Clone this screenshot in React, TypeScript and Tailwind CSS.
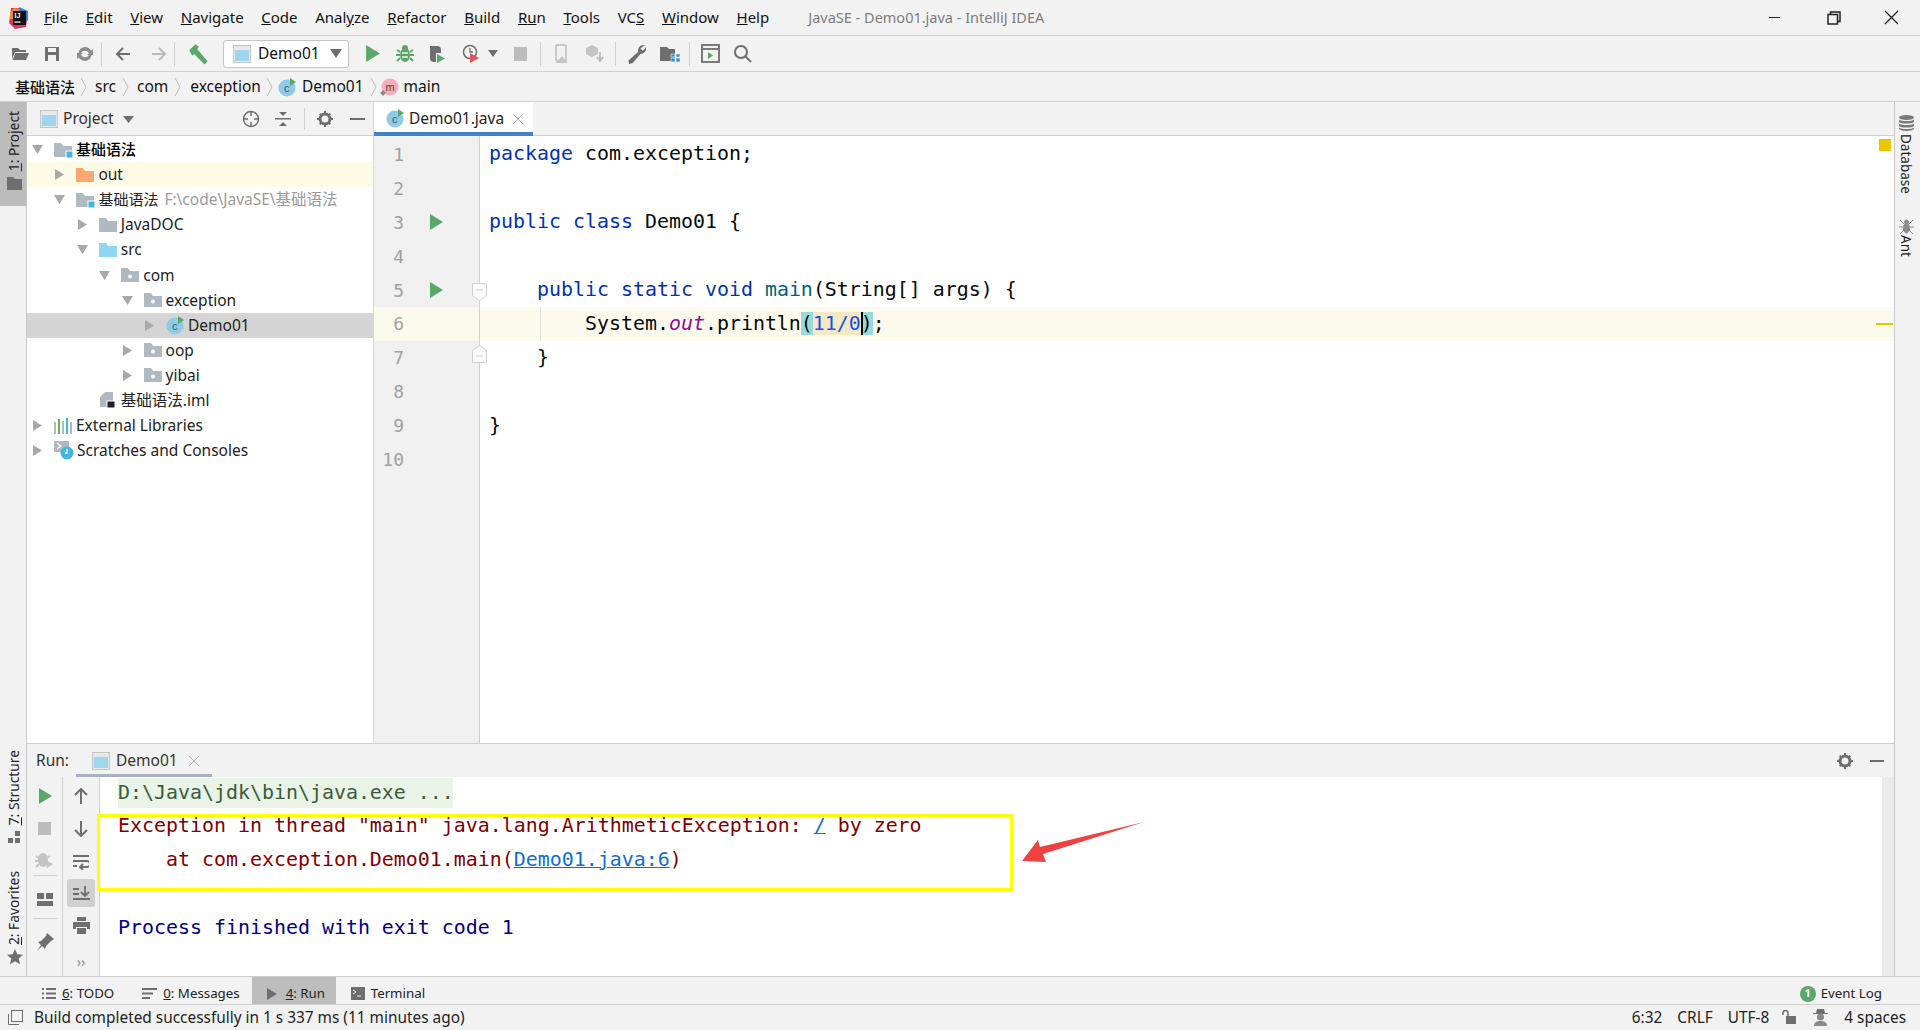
import React from "react";

const ui = "font-['Noto_Sans','Noto_Sans_CJK_SC',sans-serif]";
const mono = "font-['DejaVu_Sans_Mono',monospace] text-[19.93px]";

const Play = ({ size = 16, color = "#59a869" }: { size?: number; color?: string }) => (
  <svg width={size} height={size} viewBox="0 0 16 16"><path d="M2 0l13 8-13 8z" fill={color} /></svg>
);

const Arrow = ({ open }: { open: boolean }) => (
  <svg width="11" height="11" viewBox="0 0 11 11" className="shrink-0">
    {open ? <path d="M0 1h11L5.500 10z" fill="#a8a8a8" /> : <path d="M1 0l9 5.500L1 11z" fill="#a8a8a8" />}
  </svg>
);

const Folder = ({ color = "#afb9c1", dot = false, badge = false }: { color?: string; dot?: boolean; badge?: boolean }) => (
  <svg width="19" height="18" viewBox="0 0 19 18" className="shrink-0">
    <path d="M0 2h7l2 3h9v11H0z" fill={color} />
    {dot && <circle cx="9" cy="10.500" r="2" fill="#fff" />}
    {badge && <rect x="12" y="10" width="7" height="7" fill="#40b6e0" stroke="#fff" strokeWidth="1" />}
  </svg>
);

const ClassIcon = () => (
  <svg width="19" height="19" viewBox="0 0 19 19" className="shrink-0">
    <circle cx="9" cy="10" r="8.500" fill="#8fcbe6" />
    <text x="6" y="14" fontSize="11" fill="#3d5a68" fontFamily="Liberation Sans">c</text>
    <path d="M12 0l6 4-6 4z" fill="#59a869" />
  </svg>
);

const MethodIcon = () => (
  <svg width="19" height="19" viewBox="0 0 19 19" className="shrink-0">
    <circle cx="10" cy="9" r="8.500" fill="#f4afb8" />
    <text x="5.500" y="13" fontSize="11" fill="#5c3c40" fontFamily="Liberation Sans">m</text>
    <path d="M3 12l3 3-3 3-3-3z" fill="#8a8f94" />
  </svg>
);

const WindowIcon = () => (
  <svg width="18" height="18" viewBox="0 0 18 18" className="shrink-0">
    <rect x="0.500" y="0.500" width="17" height="17" fill="#e8e8e8" stroke="#c4c4c4" />
    <rect x="2" y="5" width="14" height="11" fill="#9fd6ee" />
  </svg>
);

const Gear = () => (
  <svg width="16" height="16" viewBox="0 0 16 16"><circle cx="8" cy="8" r="5" fill="none" stroke="#6e6e6e" strokeWidth="3" /><path d="M7 0h2v3H7zM7 13h2v3H7zM0 7h3v2H0zM13 7h3v2h-3zM2 3.400L3.400 2l2 2L4 5.400zM10.600 12l1.400-1.400 2 2-1.400 1.400zM2 12.600l2-2L5.400 12l-2 2zM10.600 4l2-2L14 3.400l-2 2z" fill="#6e6e6e" /></svg>
);

const Gray = ({ children, w = 18, h = 18 }: { children: React.ReactNode; w?: number; h?: number }) => (
  <svg width={w} height={h} viewBox="0 0 18 18" fill="#6e6e6e" className="shrink-0">{children}</svg>
);

function Slot({ w, children }: { w: string; children: React.ReactNode }) {
  return <div className={`flex items-center justify-center shrink-0 ${w}`}>{children}</div>;
}

function TitleBar() {
  const menu = [
    ["F", "ile", ""], ["E", "dit", ""], ["V", "iew", ""], ["N", "avigate", ""], ["C", "ode", ""],
    ["", "Anal", "y|ze"], ["R", "efactor", ""], ["B", "uild", ""], ["R", "", "u|n"], ["T", "ools", ""],
    ["", "VC", "S|"], ["W", "indow", ""], ["H", "elp", ""],
  ];
  return (
    <div className="h-[36px] shrink-0 flex items-center border-b border-[#d0d0d0] bg-[#f2f2f2] text-[15px] text-[#111]">
      <div className="w-[44px] pl-[9px] shrink-0">
        <svg width="20" height="22" viewBox="0 0 20 22">
          <path d="M2 1l9 0 8 5-2 14-11 2-6-6z" fill="#e0335f" />
          <path d="M10 0l9 4 0 10-6-2z" fill="#3a7be0" />
          <path d="M1 6l4-5 6 1-4 10-6 0z" fill="#f08a2a" />
          <rect x="4" y="4" width="13" height="14" fill="#111" />
          <text x="5.500" y="11" fontSize="7" fill="#fff" fontWeight="700" fontFamily="Liberation Sans">IJ</text>
          <rect x="5.500" y="14.500" width="6" height="1.200" fill="#fff" />
        </svg>
      </div>
      <div className="flex gap-[17.700px]">
        {menu.map(([a, b, c], i) => {
          const [u, rest] = c.split("|");
          return (
            <span key={i}>
              {a && <u>{a}</u>}{b}{u && <u>{u}</u>}{rest}
            </span>
          );
        })}
      </div>
      <span className="ml-[39px] text-[#7d7d7d] text-[14.500px]">JavaSE - Demo01.java - IntelliJ IDEA</span>
      <div className="ml-auto flex items-center pr-[21px]">
        <div className="w-[11px] h-[1px] bg-[#222]" />
        <svg width="14" height="14" viewBox="0 0 14 14" fill="none" stroke="#222" strokeWidth="1.500" className="ml-[47px]">
          <rect x="1" y="3.500" width="9.500" height="9.500" /><path d="M3.500 3V1H13v9.500h-2.500" />
        </svg>
        <svg width="15" height="15" viewBox="0 0 15 15" stroke="#222" strokeWidth="1.300" className="ml-[43px]"><path d="M1 1l13 13M14 1L1 14" /></svg>
      </div>
    </div>
  );
}

const Sep = ({ h = "h-[24px]" }: { h?: string }) => <div className={`w-[1px] bg-[#d0d0d0] shrink-0 ${h}`} />;

function ToolBar() {
  return (
    <div className="h-[36px] shrink-0 flex items-center pl-[5px] border-b border-[#d0d0d0] bg-[#f2f2f2]">
      <Slot w="w-[30px]"><Gray><path d="M1 3h6l2 2h6v2H4L1 14zM4.500 8H18l-3 7H1.500z" /></Gray></Slot>
      <Slot w="w-[33px]"><Gray><path d="M2 2h14v14H2zM5 3v4h8V3zM5 10v6h8v-6z" fillRule="evenodd" /></Gray></Slot>
      <Slot w="w-[33px]"><Gray><path d="M9 2a7 7 0 0 1 6 3.500l2-1.500v6h-6l2-1.500A4.500 4.500 0 0 0 5 8H2.500A7 7 0 0 1 9 2zM9 16a7 7 0 0 1-6-3.500L1 14V8h6l-2 1.500A4.500 4.500 0 0 0 13 10h2.500A7 7 0 0 1 9 16z" fill="#8c8c8c" /></Gray></Slot>
      <Sep />
      <Slot w="w-[41px]"><Gray><path d="M9 3L3 9l6 6M3 9h13" fill="none" stroke="#6e6e6e" strokeWidth="2" /></Gray></Slot>
      <Slot w="w-[31px]"><Gray><path d="M9 3l6 6-6 6M15 9H2" fill="none" stroke="#b8b8b8" strokeWidth="2" /></Gray></Slot>
      <Sep />
      <Slot w="w-[43px] pl-[4px]"><Gray w={22} h={22}><path d="M1 6l5-5 3 2-1.500 2L16 15l-2.500 2.500L5 9l-1.500 1.500z" fill="#59a869" /></Gray></Slot>
      <div className={`ml-[5px] w-[126px] h-[28px] shrink-0 flex items-center rounded-[3px] border border-[#c4c4c4] bg-white pl-[9px] text-[15.500px] text-[#111] ${ui}`}>
        <WindowIcon />
        <span className="ml-[7px]">Demo01</span>
        <svg width="12" height="9" viewBox="0 0 12 9" className="ml-[10px]"><path d="M0 0h12L6 9z" fill="#6e6e6e" /></svg>
      </div>
      <Slot w="w-[46px]"><Play size={17} /></Slot>
      <Slot w="w-[20px]">
        <svg width="18" height="19" viewBox="0 0 18 19" fill="#59a869"><ellipse cx="9" cy="11" rx="5" ry="7" /><circle cx="9" cy="4" r="3" /><path d="M1 6l3 2M17 6l-3 2M0 11h4M18 11h-4M1 17l3-3M17 17l-3-3" stroke="#59a869" strokeWidth="2" /><path d="M6 9h6M6 13h6" stroke="#f2f2f2" strokeWidth="1.500" /></svg>
      </Slot>
      <Slot w="w-[44px]">
        <svg width="18" height="18" viewBox="0 0 18 18"><path d="M2 1h7a4 4 0 0 1 4 4v3H8v9H6a4 4 0 0 1-4-4z" fill="#6e6e6e" /><path d="M9 9l8 4.500L9 18z" fill="#59a869" /></svg>
      </Slot>
      <Slot w="w-[24px]">
        <svg width="19" height="19" viewBox="0 0 19 19" fill="none"><circle cx="8" cy="8" r="6.500" stroke="#6e6e6e" strokeWidth="1.500" /><path d="M8 4v4h3" stroke="#6e6e6e" strokeWidth="1.300" /><path d="M8 9l9 5-9 5z" fill="#db5860" /></svg>
      </Slot>
      <Slot w="w-[19px]"><svg width="10" height="7" viewBox="0 0 10 7"><path d="M0 0h10L5 7z" fill="#6e6e6e" /></svg></Slot>
      <Slot w="w-[37px]"><div className="w-[13px] h-[14px] bg-[#bcbcbc]" /></Slot>
      <div className="ml-[1px]"><Sep /></div>
      <Slot w="w-[42px]">
        <svg width="18" height="20" viewBox="0 0 18 20" fill="none"><rect x="3" y="1" width="10" height="16" rx="1" stroke="#bcbcbc" strokeWidth="1.500" /><path d="M9 12l6 7H3z" fill="#c4c4c4" /></svg>
      </Slot>
      <Slot w="w-[26px]">
        <svg width="20" height="20" viewBox="0 0 20 20"><path d="M6 1l6 3v6l-6 3-6-3V4z" fill="#c4c4c4" /><path d="M14 8v8M11 13l3 4 3-4" stroke="#bcbcbc" strokeWidth="1.800" fill="none" /></svg>
      </Slot>
      <div className="ml-[6px]"><Sep /></div>
      <Slot w="w-[39px]"><Gray w={20} h={20}><path d="M17 1a5 5 0 0 0-6 6L2 15l1 3 3-1 7-8a5 5 0 0 0 5-6l-3 3-2-2z" /></Gray></Slot>
      <Slot w="w-[29px]">
        <svg width="20" height="18" viewBox="0 0 20 18"><path d="M0 2h7l2 2h6v12H0z" fill="#6e6e6e" /><path d="M11 9h4v3h-4zM16 9h4v3h-4zM11 13h4v4h-4zM16 13h4v4h-4z" fill="#3d8fd8" stroke="#f2f2f2" strokeWidth="0.600" /></svg>
      </Slot>
      <div className="ml-[5px]"><Sep /></div>
      <Slot w="w-[41px]">
        <svg width="19" height="19" viewBox="0 0 19 19" fill="none"><rect x="1" y="1" width="17" height="17" stroke="#6e6e6e" strokeWidth="1.800" /><path d="M1 5h17" stroke="#6e6e6e" strokeWidth="1.800" /><path d="M7 8l5 3.500L7 15z" fill="#59a869" /></svg>
      </Slot>
      <Slot w="w-[22px]">
        <svg width="19" height="19" viewBox="0 0 19 19" fill="none" stroke="#6e6e6e" strokeWidth="2"><circle cx="8" cy="8" r="6" /><path d="M12 12l6 6" /></svg>
      </Slot>
    </div>
  );
}

const Chevron = () => (
  <svg width="7" height="20" viewBox="0 0 7 20" className="shrink-0" fill="none" stroke="#c0c0c0"><path d="M1 1l5 9-5 9" /></svg>
);

function NavBar() {
  return (
    <div className="h-[30px] shrink-0 flex items-center pl-[15px] pt-[1px] border-b border-[#d0d0d0] bg-[#f2f2f2] text-[15.500px] text-[#111]">
      <span className="font-medium w-[60px] text-[15px]">基础语法</span>
      <div className="ml-[5px]"><Chevron /></div>
      <span className="ml-[8px]">src</span>
      <div className="ml-[6px]"><Chevron /></div>
      <span className="ml-[8px]">com</span>
      <div className="ml-[6px]"><Chevron /></div>
      <span className="ml-[9px]">exception</span>
      <div className="ml-[5px]"><Chevron /></div>
      <div className="ml-[5px]"><ClassIcon /></div>
      <span className="ml-[5px]">Demo01</span>
      <div className="ml-[6px]"><Chevron /></div>
      <div className="ml-[3px]"><MethodIcon /></div>
      <span className="ml-[5px]">main</span>
    </div>
  );
}

function LeftStrip() {
  const vert = "[writing-mode:vertical-rl] rotate-180 text-[13.800px] text-[#222]";
  return (
    <div className="w-[27px] shrink-0 flex flex-col border-r border-[#c8c8c8] bg-[#f2f2f2]">
      <div className="h-[104px] bg-[#bcbcbc] flex flex-col items-center pl-[3px] pt-[9px] gap-[6px] shrink-0">
        <span className={vert}><u>1</u>: Project</span>
        <svg width="15" height="13" viewBox="0 0 15 13"><path d="M0 0h6l2 2h7v11H0z" fill="#6e6e6e" /></svg>
      </div>
      <div className="mt-auto flex flex-col items-center pl-[3px]">
        <span className={vert}><u>7</u>: Structure</span>
        <svg width="13" height="12" viewBox="0 0 13 12" className="mt-[6px]" fill="#6e6e6e"><path d="M7 0h5v5H7zM0 7h5v5H0zM7 7h5v5H7z" /></svg>
        <span className={`${vert} mt-[28px]`}><u>2</u>: Favorites</span>
        <svg width="16" height="16" viewBox="0 0 16 16" className="mt-[4px] mb-[11px]" fill="#6e6e6e"><path d="M8 0l2.300 5.300 5.700.5-4.300 3.800 1.300 5.600L8 12.300 3 15.200l1.300-5.600L0 5.800l5.700-.5z" /></svg>
      </div>
    </div>
  );
}

type Row = {
  level: number;
  arrow?: "open" | "closed";
  icon: React.ReactNode;
  label: React.ReactNode;
  rowClass?: string;
};

const rows: Row[] = [
  { level: 0, arrow: "open", icon: <Folder badge />, label: <span className="font-medium text-black text-[15px]">基础语法</span> },
  { level: 1, arrow: "closed", icon: <Folder color="#f9a870" />, label: "out", rowClass: "bg-[#fdfbe6]" },
  { level: 1, arrow: "open", icon: <Folder badge />, label: <><span className="text-[15px]">基础语法</span><span className="ml-[6px] text-[#9a9a9a]">F:\code\JavaSE\基础语法</span></> },
  { level: 2, arrow: "closed", icon: <Folder />, label: "JavaDOC" },
  { level: 2, arrow: "open", icon: <Folder color="#8fd6f0" />, label: "src" },
  { level: 3, arrow: "open", icon: <Folder dot />, label: "com" },
  { level: 4, arrow: "open", icon: <Folder dot />, label: "exception" },
  { level: 5, arrow: "closed", icon: <ClassIcon />, label: "Demo01", rowClass: "bg-[#d4d4d4]" },
  { level: 4, arrow: "closed", icon: <Folder dot />, label: "oop" },
  { level: 4, arrow: "closed", icon: <Folder dot />, label: "yibai" },
  {
    level: 2,
    icon: (
      <svg width="19" height="18" viewBox="0 0 19 18" className="shrink-0"><path d="M6 1h8v15H1V6z" fill="#afb9c1" /><rect x="8" y="10" width="8" height="7" fill="#222" stroke="#fff" /></svg>
    ),
    label: "基础语法.iml",
  },
  {
    level: 0,
    arrow: "closed",
    icon: (
      <svg width="19" height="16" viewBox="0 0 19 16" className="shrink-0"><path d="M0 4h2v12H0z" fill="#afb9c1" /><path d="M4 1h2v15H4z" fill="#62b543" /><path d="M8 3h2v13H8z" fill="#afb9c1" /><path d="M12 0h2v16h-2z" fill="#40b6e0" /><path d="M16 4h2v12h-2z" fill="#afb9c1" /></svg>
    ),
    label: "External Libraries",
  },
  {
    level: 0,
    arrow: "closed",
    icon: (
      <svg width="20" height="19" viewBox="0 0 20 19" className="shrink-0"><rect x="0" y="0" width="15" height="11" fill="#afb9c1" /><path d="M3 2l4 3-4 3" stroke="#fff" fill="none" strokeWidth="1.300" /><circle cx="13" cy="12" r="6.500" fill="#40b6e0" /><path d="M13 8v4h-2" stroke="#fff" fill="none" strokeWidth="1.300" /></svg>
    ),
    label: "Scratches and Consoles",
  },
];

function ProjectPane() {
  return (
    <div className="w-[347px] shrink-0 flex flex-col bg-white border-r border-[#d8d8d8]">
      <div className="h-[34px] shrink-0 flex items-center pl-[13px] pt-[1px] bg-[#f2f2f2] border-b border-[#d0d0d0] text-[15.500px] text-[#333]">
        <WindowIcon />
        <span className="ml-[5px]">Project</span>
        <svg width="11" height="7" viewBox="0 0 11 7" className="ml-[9px]"><path d="M0 0h11L5.500 7z" fill="#6e6e6e" /></svg>
        <div className="ml-[108px]">
          <svg width="18" height="18" viewBox="0 0 18 18" fill="none" stroke="#6e6e6e" strokeWidth="1.500"><circle cx="9" cy="9" r="7.500" /><path d="M9 1v5M9 12v5M1 9h5M12 9h5" /></svg>
        </div>
        <div className="ml-[15px]">
          <svg width="16" height="18" viewBox="0 0 16 18" fill="#6e6e6e"><rect y="8" width="16" height="1.500" /><path d="M4 2h8L8 6zM4 16h8l-4-4z" /></svg>
        </div>
        <div className="ml-[13px]"><Sep h="h-[22px]" /></div>
        <div className="ml-[12px]"><Gear /></div>
        <div className="ml-[17px] w-[15px] h-[2px] bg-[#6e6e6e]" />
      </div>
      <div className="pt-[1px] text-[15.500px] text-[#222] leading-[25px]">
        {rows.map((r, i) => (
          <div key={i} className={`h-[25.100px] flex items-center relative ${r.rowClass ?? ""}`} style={{ paddingLeft: 5 + r.level * 22.4 }}>
            <div className="w-[22px] shrink-0">{r.arrow && <Arrow open={r.arrow === "open"} />}</div>
            {r.icon}
            <span className="ml-[3px] whitespace-nowrap">{r.label}</span>
          </div>
        ))}
      </div>
    </div>
  );
}

const Kw = ({ children }: { children: React.ReactNode }) => <span className="text-[#0033b3]">{children}</span>;

const code: React.ReactNode[] = [
  <><Kw>package</Kw> com.exception;</>,
  "",
  <><Kw>public class</Kw> Demo01 {"{"}</>,
  "",
  <>{"    "}<Kw>public static void</Kw> <span className="text-[#00627a]">main</span>(String[] args) {"{"}</>,
  <>{"        "}System.<i className="text-[#871094]">out</i>.println<span className="bg-[#99d9d9]">(</span><span className="bg-[#f5e8c4] text-[#1750eb]">11/0</span><span className="bg-[#99d9d9] relative"><span className="absolute left-0 top-0 bottom-0 w-[2px] bg-black" />)</span>;</>,
  <>{"    "}{"}"}</>,
  "",
  "}",
  "",
];

function FoldMark({ up }: { up?: boolean }) {
  return (
    <svg width="15" height="18" viewBox="0 0 15 18" fill="#fafafa" stroke="#d0d0d0">
      <path d={up ? "M.5 17.500v-12L7.500.5l7 5v12z" : "M.5.5v12l7 5 7-5V.5z"} />
      <path d={up ? "M4 11h7" : "M4 7h7"} />
    </svg>
  );
}

function Editor() {
  return (
    <div className="flex-1 min-w-0 flex flex-col">
      <div className="h-[34px] shrink-0 flex bg-[#f2f2f2] border-b border-[#d0d0d0]">
        <div className="w-[159px] h-[34px] flex items-center pl-[12px] pt-[3px] bg-white border-b-[4px] border-[#4083c9] text-[15.500px] text-[#222]">
          <ClassIcon />
          <span className="ml-[4px]">Demo01.java</span>
          <svg width="10" height="10" viewBox="0 0 10 10" className="ml-[9px]" stroke="#b0b0b0"><path d="M0 0l10 10M10 0L0 10" /></svg>
        </div>
      </div>
      <div className="flex-1 flex bg-white relative overflow-hidden">
        <div className="w-[106px] shrink-0 bg-[#f0f0f0] border-r border-[#d0d0d0] pt-[1.500px] font-['DejaVu_Sans_Mono',monospace] text-[18px] text-[#a0a0a0]">
          {code.map((_, i) => (
            <div key={i} className={`h-[33.900px] flex items-center relative ${i === 5 ? "bg-[#fcfaed]" : ""}`}>
              <span className="w-[30px] text-right">{i + 1}</span>
              {(i === 2 || i === 4) && <div className="ml-[24px]"><Play size={16} /></div>}
              {i === 4 && <div className="absolute right-[-8px] top-[10px]"><FoldMark /></div>}
              {i === 6 && <div className="absolute right-[-8px] top-[4px]"><FoldMark up /></div>}
            </div>
          ))}
        </div>
        <div className={`flex-1 pt-[1.500px] ${mono} text-[#080808]`}>
          {code.map((line, i) => (
            <div key={i} className={`h-[33.900px] pl-[9px] flex items-center whitespace-pre relative ${i === 5 ? "bg-[#fcfaed]" : ""}`}>
              {i === 5 && <div className="absolute left-[60px] top-0 bottom-0 w-[1px] bg-[#e0e0e0]" />}
              <span>{line}</span>
              {i === 5 && <div className="absolute right-[1px] top-[16px] w-[17px] h-[2px] bg-[#e6c700]" />}
            </div>
          ))}
        </div>
        <div className="absolute right-[3px] top-[3px] w-[12px] h-[12px] bg-[#ebc700]" />
      </div>
    </div>
  );
}

function RightStrip() {
  return (
    <div className="w-[26px] shrink-0 flex flex-col items-center pr-[3px] pt-[13px] bg-[#f2f2f2] border-l border-[#c8c8c8] text-[13.500px] text-[#222]">
      <svg width="15" height="16" viewBox="0 0 15 16" fill="#7a7a7a"><ellipse cx="7.500" cy="2.500" rx="7.500" ry="2.500" /><path d="M0 4.500c2 2 13 2 15 0v2.500c-2 2-13 2-15 0zM0 8.500c2 2 13 2 15 0V11c-2 2-13 2-15 0zM0 12.500c2 2 13 2 15 0V14c-2 2.500-13 2.500-15 0z" /></svg>
      <span className="[writing-mode:vertical-rl] mt-[3px]">Database</span>
      <svg width="15" height="15" viewBox="0 0 15 15" className="mt-[25px]" fill="#8a8a8a" stroke="#8a8a8a"><ellipse cx="7.500" cy="9" rx="3" ry="5" /><circle cx="7.500" cy="3" r="2" /><path d="M1 1l4 4M14 1l-4 4M0 8h4M15 8h-4M1 15l4-4M14 15l-4-4" /></svg>
      <span className="[writing-mode:vertical-rl] mt-[1px]">Ant</span>
    </div>
  );
}

function Divider() {
  return <div className="w-[24px] h-[1px] bg-[#d0d0d0] my-[6px]" />;
}

function RunPanel() {
  return (
    <div className="h-[233px] shrink-0 flex flex-col border-t border-[#d0d0d0] bg-white">
      <div className="h-[33px] shrink-0 flex items-center pl-[9px] bg-[#f2f2f2] text-[15.500px] text-[#333] relative">
        <span>Run:</span>
        <div className="ml-[23px]"><WindowIcon /></div>
        <span className="ml-[6px]">Demo01</span>
        <svg width="10" height="10" viewBox="0 0 10 10" className="ml-[11px]" stroke="#b0b0b0"><path d="M0 0l10 10M10 0L0 10" /></svg>
        <div className="absolute left-[49px] bottom-0 w-[136px] h-[3px] bg-[#a7b0c4]" />
        <div className="ml-auto flex items-center gap-[17px] pr-[10px]">
          <Gear />
          <div className="w-[14px] h-[2px] bg-[#6e6e6e]" />
        </div>
      </div>
      <div className="flex-1 flex min-h-0">
        <div className="w-[36px] shrink-0 flex flex-col items-center bg-[#f2f2f2] border-r border-[#d0d0d0] pt-[11px]">
          <Play size={16} />
          <div className="w-[13px] h-[13px] bg-[#bcbcbc] mt-[18px]" />
          <svg width="19" height="19" viewBox="0 0 19 19" fill="#c4c4c4" className="mt-[15px]"><ellipse cx="8" cy="10" rx="5" ry="7" /><path d="M1 6l3 2M15 6l-3 2M0 11h4M1 17l3-3" stroke="#c4c4c4" strokeWidth="2" /><path d="M10 10l8 4-6 4z" /></svg>
          <Divider />
          <svg width="16" height="13" viewBox="0 0 16 13" fill="#6e6e6e" className="mt-[11px]"><path d="M0 0h7v6H0zM9 0h7v6H9zM0 8h16v5H0z" /></svg>
          <div className="mt-[6px]"><Divider /></div>
          <svg width="18" height="18" viewBox="0 0 18 18" className="mt-[8px]"><path d="M11 0l7 6-3 2-5 5-1 3-3-3-5 5 4-6-3-3 3-1 5-5z" fill="#6e6e6e" /></svg>
        </div>
        <div className="w-[37px] shrink-0 flex flex-col items-center bg-[#f2f2f2] border-r border-[#d0d0d0] pt-[11px]">
          <svg width="14" height="16" viewBox="0 0 14 16" fill="none" stroke="#6e6e6e" strokeWidth="2"><path d="M1 7l6-6 6 6M7 1v15" /></svg>
          <svg width="14" height="16" viewBox="0 0 14 16" fill="none" stroke="#6e6e6e" strokeWidth="2" className="mt-[17px]"><path d="M1 9l6 6 6-6M7 15V0" /></svg>
          <svg width="16" height="16" viewBox="0 0 16 16" fill="none" stroke="#6e6e6e" strokeWidth="1.800" className="mt-[17px]"><path d="M0 2h16M0 7h14a2.500 2.500 0 0 1 0 6H8M10 10l-3 3 3 3M0 12h4" /></svg>
          <div className="w-[28px] h-[28px] mt-[9px] rounded-[3px] bg-[#d0d0d0] flex items-center justify-center">
            <svg width="17" height="15" viewBox="0 0 17 15" fill="none" stroke="#6e6e6e" strokeWidth="1.800"><path d="M0 3h6M0 8h6M0 13h17M12 0v9M8 6l4 4 4-4" /></svg>
          </div>
          <svg width="17" height="17" viewBox="0 0 17 17" fill="#6e6e6e" className="mt-[10px]"><path d="M4 0h9v4H4zM0 5h17v7h-3v-2H3v2H0zM4 11h9v6H4z" /></svg>
          <span className="mt-[21px] text-[14px] leading-[14px] text-[#8a8a8a]">››</span>
        </div>
        <div className={`flex-1 relative pl-[18px] whitespace-pre ${mono}`}>
          <div className="h-[30px] w-[335px] mt-[1px] flex items-center bg-[#e9f3e6] text-[#3c5a3c]">D:\Java\jdk\bin\java.exe ...</div>
          <div className="h-[33.900px] mt-[1px] flex items-center text-[#800000]">
            Exception in thread "main" java.lang.ArithmeticException: <span className="text-[#0f6fd0] underline">/</span> by zero
          </div>
          <div className="h-[33.900px] flex items-center text-[#800000]">
            {"    at com.exception.Demo01.main("}<span className="text-[#0f6fd0] underline">Demo01.java:6</span>)
          </div>
          <div className="h-[33.900px]" />
          <div className="h-[33.900px] flex items-center text-[#000080]">Process finished with exit code 1</div>
          <div className="absolute left-[-3px] top-[37px] w-[916px] h-[77px] border-[3px] border-[#ffff00]" />
          <svg width="122" height="42" viewBox="0 0 122 42" className="absolute left-[922px] top-[45px]">
            <path d="M0 39L16 18l2 7L122 0 21 32l3 8z" fill="#f04040" />
          </svg>
          <div className="absolute right-0 top-0 bottom-0 w-[12px] bg-[#ebebeb]" />
        </div>
      </div>
    </div>
  );
}

function ToolTabs() {
  return (
    <div className="h-[28px] shrink-0 flex border-t border-[#d0d0d0] bg-[#f2f2f2] text-[13.300px] text-[#222]">
      <div className="pl-[42px] pt-[6px] flex items-center">
        <svg width="14" height="11" viewBox="0 0 14 11" fill="#6e6e6e"><path d="M0 0h2v2H0zM4 0h10v2H4zM0 4.500h2v2H0zM4 4.500h10v2H4zM0 9h2v2H0zM4 9h10v2H4z" /></svg>
        <span className="ml-[6px]"><u>6</u>: TODO</span>
      </div>
      <div className="pl-[28px] pt-[6px] flex items-center">
        <svg width="15" height="11" viewBox="0 0 15 11" fill="#6e6e6e"><path d="M0 0h15v2H0zM0 4.500h11v2H0zM0 9h8v2H0z" /></svg>
        <span className="ml-[6px]"><u>0</u>: Messages</span>
      </div>
      <div className="ml-[12px] w-[84px] flex items-center pl-[15px] pt-[6px] bg-[#bdbdbd]">
        <svg width="10" height="12" viewBox="0 0 10 12"><path d="M0 0l10 6-10 6z" fill="#6e6e6e" /></svg>
        <span className="ml-[9px]"><u>4</u>: Run</span>
      </div>
      <div className="pl-[15px] pt-[6px] flex items-center">
        <svg width="14" height="13" viewBox="0 0 14 13"><rect width="14" height="13" fill="#6e6e6e" /><path d="M2 3l3 2-3 2M6 9h4" stroke="#f2f2f2" fill="none" /></svg>
        <span className="ml-[6px]">Terminal</span>
      </div>
      <div className="ml-auto flex items-center pr-[38px] pt-[6px]">
        <div className="w-[16px] h-[16px] rounded-full bg-[#59a869] flex items-center justify-center text-white text-[11px] font-bold">1</div>
        <span className="ml-[5px]">Event Log</span>
      </div>
    </div>
  );
}

function StatusBar() {
  return (
    <div className="h-[26px] shrink-0 flex items-center pl-[8px] border-t border-[#d0d0d0] bg-[#f2f2f2] text-[15.400px] text-[#222]">
      <svg width="15" height="15" viewBox="0 0 15 15" fill="none" stroke="#6e6e6e"><rect x="3.500" y="0.500" width="11" height="11" /><path d="M0.500 4v10.500H11" /></svg>
      <span className="ml-[11px]">Build completed successfully in 1 s 337 ms (11 minutes ago)</span>
      <div className="ml-auto flex items-center pr-[14px]">
        <span>6:32</span>
        <span className="ml-[15px]">CRLF</span>
        <span className="ml-[15px]">UTF-8</span>
        <svg width="14" height="14" viewBox="0 0 14 14" className="ml-[13px]" fill="none"><path d="M1 5V3a2.500 2.500 0 0 1 5 0v3" stroke="#6e6e6e" strokeWidth="1.500" /><rect x="4" y="6" width="10" height="8" fill="#6e6e6e" /></svg>
        <svg width="15" height="17" viewBox="0 0 15 17" className="ml-[17px]" fill="#8a8a8a"><path d="M3 4l1-4h7l1 4h3v1H0V4z" fill="#6e6e6e" /><circle cx="7.500" cy="8" r="3.500" /><path d="M1 17c0-4 3-5 6.500-5s6.500 1 6.500 5z" /></svg>
        <span className="ml-[16px]">4 spaces</span>
      </div>
    </div>
  );
}

export default function App() {
  return (
    <div className={`w-[1920px] h-[1030px] flex flex-col overflow-hidden bg-[#f2f2f2] ${ui}`}>
      <TitleBar />
      <ToolBar />
      <NavBar />
      <div className="flex-1 flex min-h-0">
        <LeftStrip />
        <div className="flex-1 min-w-0 flex flex-col">
          <div className="flex-1 flex min-h-0">
            <ProjectPane />
            <Editor />
          </div>
          <RunPanel />
        </div>
        <RightStrip />
      </div>
      <ToolTabs />
      <StatusBar />
    </div>
  );
}
